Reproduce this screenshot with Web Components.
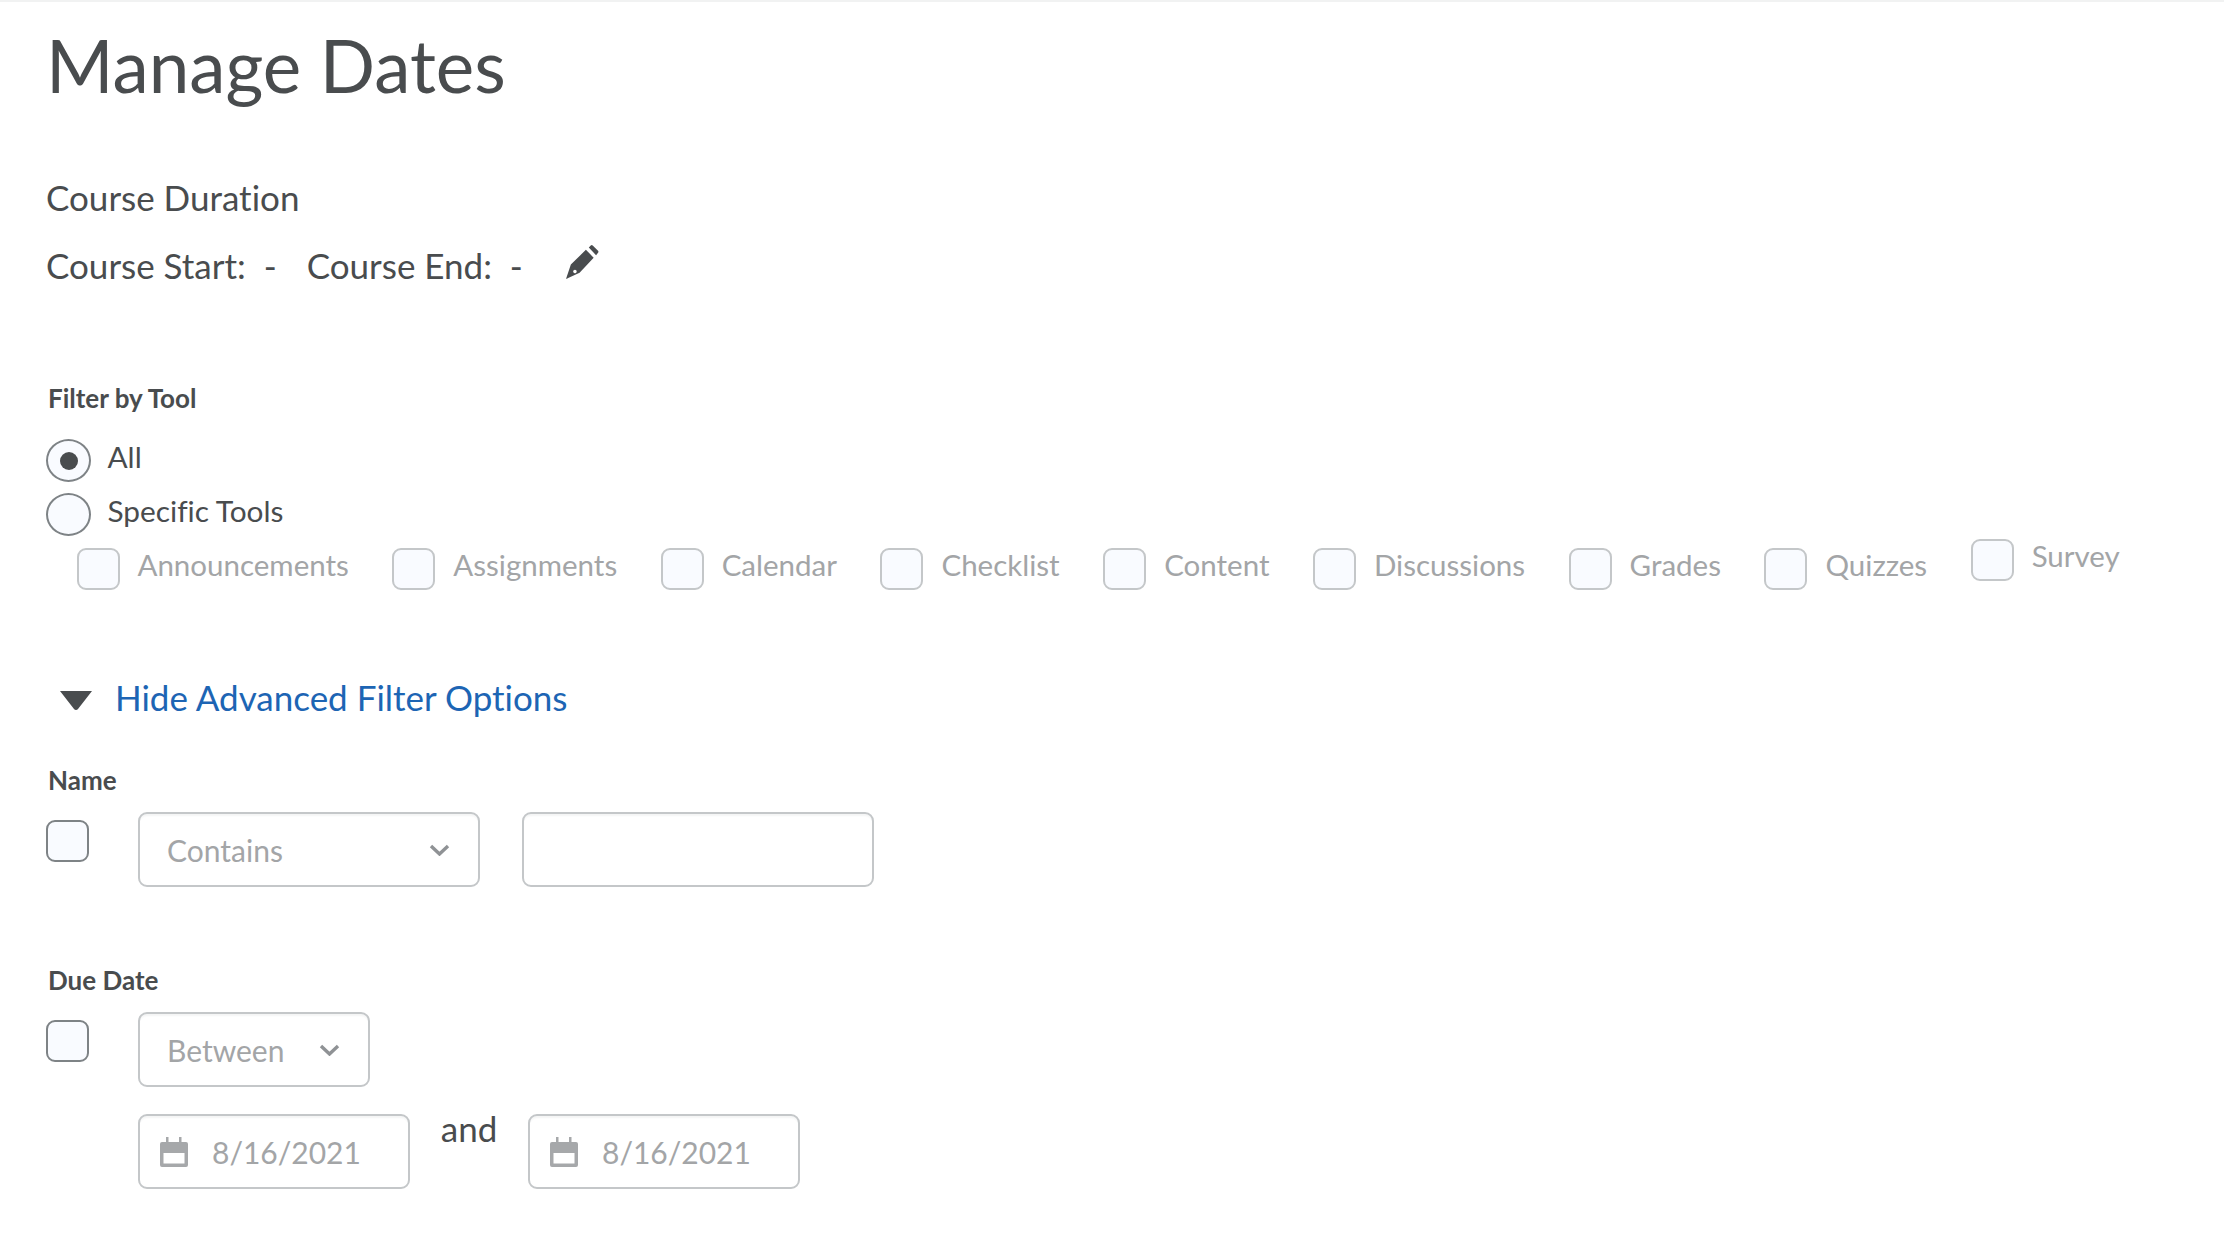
<!DOCTYPE html>
<html>
<head>
<meta charset="utf-8">
<title>Manage Dates</title>
<style>
    html, body { margin: 0; background: #fff; }
    body { font-family: Lato, "Open Sans", sans-serif; color: #494c4e; font-variant-ligatures: none; }
</style>
</head>
<body>
<manage-dates></manage-dates>
<script>
class DlCheck extends HTMLElement {
    constructor() {
        super()
        this.attachShadow({ mode: 'open' })
        this.shadowRoot.innerHTML = `
            <style>
                :host { display: inline-flex; align-items: flex-start; gap: 18px; font-size: 29.500px; line-height: 36px; }
                .box { width: 39px; height: 38px; border: 2px solid #c4c7c9; border-radius: 9px; background: #f9fbff; flex: none; }
                :host([active]) .box { border-color: #7e8386; }
                .text { color: #a3a5a7; margin-top: -1px; white-space: nowrap; }
            </style>
            <div class="box"></div>
            <div class="text"><slot></slot></div>
        `
    }
}
customElements.define('dl-check', DlCheck)

class DlRadio extends HTMLElement {
    constructor() {
        super()
        this.attachShadow({ mode: 'open' })
        this.shadowRoot.innerHTML = `
            <style>
                :host { display: flex; align-items: flex-start; gap: 16.500px; font-size: 29.800px; line-height: 36px; color: #494c4e; }
                .dot { width: 41px; height: 39px; border: 2px solid #7e8386; border-radius: 50%; background: #f9fbff; flex: none; display: flex; align-items: center; justify-content: center; }
                .dot i { width: 18px; height: 18px; border-radius: 50%; background: #494c4e; display: none; }
                :host([checked]) .dot i { display: block; }
            </style>
            <div class="dot"><i></i></div>
            <div><slot></slot></div>
        `
    }
}
customElements.define('dl-radio', DlRadio)

class DlSelect extends HTMLElement {
    constructor() {
        super()
        this.attachShadow({ mode: 'open' })
        this.shadowRoot.innerHTML = `
            <style>
                :host { display: flex; align-items: center; justify-content: space-between; box-sizing: border-box; height: 75px; padding: 0 28px 0 27px; border: 2px solid #c4c7c9; border-radius: 9px; box-shadow: inset 0 3px 2px -1px #f4f5f5; font-size: 30px; color: #a3a5a7; }
                svg { width: 21px; height: 12px; flex: none; }
            </style>
            <slot></slot>
            <svg viewBox="0 0 21 12"><path d="M2 2l8.500 8L19 2" fill="none" stroke="#8f9295" stroke-width="3.400"/></svg>
        `
    }
}
customElements.define('dl-select', DlSelect)

class DlInput extends HTMLElement {
    constructor() {
        super()
        this.attachShadow({ mode: 'open' })
        this.shadowRoot.innerHTML = `
            <style>
                :host { display: flex; align-items: center; gap: 24px; box-sizing: border-box; height: 75px; padding: 0 20px; border: 2px solid #c4c7c9; border-radius: 9px; box-shadow: inset 0 3px 2px -1px #f4f5f5; font-size: 30px; color: #a3a5a7; }
            </style>
            <slot></slot>
        `
    }
}
customElements.define('dl-input', DlInput)

class CalendarIcon extends HTMLElement {
    constructor() {
        super()
        this.attachShadow({ mode: 'open' })
        this.shadowRoot.innerHTML = `
            <style>
                :host { display: block; width: 28px; height: 30px; flex: none; }
                svg { display: block; width: 28px; height: 30px; }
            </style>
            <svg viewBox="0 0 28 30">
                <path fill="#a6a8aa" d="M6 0h2.500v5H19V0h2.500v5H26a2 2 0 0 1 2 2v21a2 2 0 0 1-2 2H2a2 2 0 0 1-2-2V7a2 2 0 0 1 2-2h4z"/>
                <rect x="3.500" y="16" width="21" height="10.500" fill="#fff"/>
            </svg>
        `
    }
}
customElements.define('calendar-icon', CalendarIcon)

class PencilIcon extends HTMLElement {
    constructor() {
        super()
        this.attachShadow({ mode: 'open' })
        this.shadowRoot.innerHTML = `
            <style>
                :host { display: block; width: 33px; height: 34px; flex: none; }
                svg { display: block; width: 33px; height: 34px; }
            </style>
            <svg viewBox="0 0 34 35">
                <path fill="#494c4e" fill-rule="evenodd" d="M0 35L5 20 20.500 5 28.500 13 14 28.500zM8 26a1.800 1.800 0 1 0 3 1.500 1.800 1.800 0 0 0-3-1.500z"/>
                <path fill="#494c4e" d="M23.500 2.500l2-2a1.500 1.500 0 0 1 2 0l5.500 5.500a1.500 1.500 0 0 1 0 2l-2 2.500z"/>
            </svg>
        `
    }
}
customElements.define('pencil-icon', PencilIcon)

class ManageDates extends HTMLElement {
    constructor() {
        super()
        this.attachShadow({ mode: 'open' })
        this.render()
    }

    render() {
        const tools = ['Announcements', 'Assignments', 'Calendar', 'Checklist', 'Content', 'Discussions', 'Grades', 'Quizzes']
        this.shadowRoot.innerHTML = `
            <style>
                :host { display: block; box-sizing: border-box; height: 1248px; overflow: hidden; border-top: 2px solid #f1f2f2; padding: 0 46px; color: #494c4e; }
                h1 { margin: 18px 0 0; font-size: 72.800px; line-height: 90px; font-weight: 400; }
                .duration { margin-top: 66px; font-size: 35px; line-height: 42px; }
                .dates { display: flex; align-items: center; margin-top: 26px; height: 42px; font-size: 35px; }
                .dates span { white-space: pre; }
                .dates span:nth-child(2) { margin-left: 30px; }
                .dates pencil-icon { margin: -6px 0 0 43px; }
                .label { font-size: 26px; line-height: 32px; font-weight: 700; padding-left: 2px; }
                .filter { margin-top: 96px; }
                .radios { margin-top: 25px; display: flex; flex-direction: column; gap: 11px; }
                .tools { display: flex; align-items: flex-start; gap: 43.500px; margin-left: 30.500px; }
                .tools dl-check { margin-top: 12px; }
                .tools dl-check:last-child { margin-top: 3px; }
                .toggle { display: flex; align-items: center; margin-top: 86px; padding-left: 14px; gap: 23px; font-size: 35px; line-height: 42px; color: #1d65b4; }
                .toggle svg { width: 32px; height: 19px; flex: none; margin-top: 6px; }
                .name-label { margin-top: 46px; }
                .row { display: flex; align-items: flex-start; margin-top: 16px; }
                .row > dl-check { margin-top: 8px; margin-right: 31px; }
                .contains { width: 342px; }
                .empty { width: 352px; margin-left: 42px; }
                .due-label { margin-top: 77px; }
                .between { width: 232px; }
                .range { display: flex; align-items: flex-start; margin: 27px 0 0 92px; }
                .range dl-input { width: 272px; }
                .and { width: 118px; text-align: center; font-size: 35px; line-height: 42px; margin-top: -7px; }
            </style>
            <h1>Manage Dates</h1>
            <div class="duration">Course Duration</div>
            <div class="dates"><span>Course Start:  -</span><span>Course End:  -</span><pencil-icon></pencil-icon></div>
            <div class="label filter">Filter by Tool</div>
            <div class="radios">
                <dl-radio checked>All</dl-radio>
                <dl-radio>Specific Tools</dl-radio>
            </div>
            <div class="tools">
                ${tools.map(t => `<dl-check>${t}</dl-check>`).join('')}
                <dl-check>Survey</dl-check>
            </div>
            <div class="toggle">
                <svg viewBox="0 0 32 19"><path fill="#494c4e" d="M0 0h32L18 18a2.500 2.500 0 0 1-4 0z"/></svg>
                <span>Hide Advanced Filter Options</span>
            </div>
            <div class="label name-label">Name</div>
            <div class="row">
                <dl-check active></dl-check>
                <dl-select class="contains">Contains</dl-select>
                <dl-input class="empty"></dl-input>
            </div>
            <div class="label due-label">Due Date</div>
            <div class="row">
                <dl-check active></dl-check>
                <dl-select class="between">Between</dl-select>
            </div>
            <div class="range">
                <dl-input><calendar-icon></calendar-icon>8/16/2021</dl-input>
                <div class="and">and</div>
                <dl-input><calendar-icon></calendar-icon>8/16/2021</dl-input>
            </div>
        `
    }
}
customElements.define('manage-dates', ManageDates)
</script>
</body>
</html>
